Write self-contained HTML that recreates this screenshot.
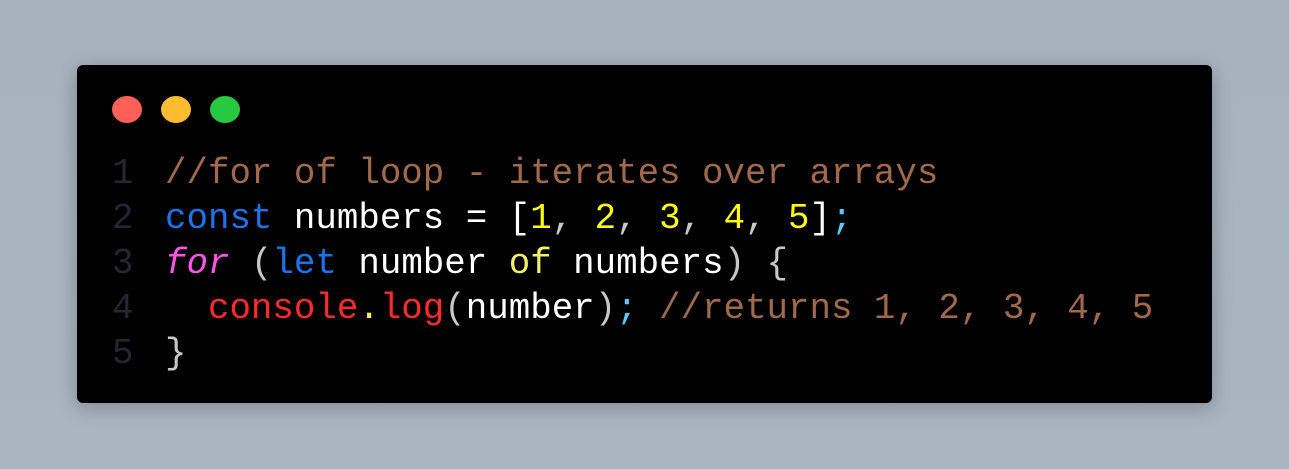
<!DOCTYPE html>
<html><head><style>
html,body{margin:0;padding:0}
body{width:1289px;height:469px;background:linear-gradient(180deg,#a7b2be,#aab5c1);position:relative;overflow:hidden;font-family:"Liberation Mono",monospace}
.card{position:absolute;left:77px;top:65px;width:1135px;height:338px;background:#000;border-radius:6px;box-shadow:0 4px 20px rgba(0,0,0,.25)}
.dot{position:absolute;top:96px;width:30px;height:27px;border-radius:50%}
.line{position:absolute;left:112px;font-size:35.8px;white-space:pre;line-height:45px;color:#fff}
.n{color:#222731;display:inline-block;width:53px}
.c{color:#a0694a}.k{color:#1a74ee}.y{color:#ffff00}.p{color:#ff55e6;font-style:italic}.r{color:#ff2a2a}.s{color:#5ac8fa}.g{color:#c8c8c8}.o{color:#f0f06a}
</style></head><body>
<div class="card"></div>
<div class="dot" style="left:112px;background:#fe5f57"></div>
<div class="dot" style="left:161px;background:#febc2e"></div>
<div class="dot" style="left:210px;background:#28c840"></div>
<div class="line" style="top:151px"><span class="n">1</span><span class="c">//for of loop - iterates over arrays</span></div>
<div class="line" style="top:196px"><span class="n">2</span><span class="k">const</span> numbers = [<span class="y">1</span><span class="g">,</span> <span class="y">2</span><span class="g">,</span> <span class="y">3</span><span class="g">,</span> <span class="y">4</span><span class="g">,</span> <span class="y">5</span>]<span class="s">;</span></div>
<div class="line" style="top:241px"><span class="n">3</span><span class="p">for</span> <span class="g">(</span><span class="k">let</span> number <span class="o">of</span> numbers<span class="g">)</span> <span class="g">{</span></div>
<div class="line" style="top:286px"><span class="n">4</span>  <span class="r">console</span><span class="o">.</span><span class="r">log</span><span class="g">(</span>number<span class="g">)</span><span class="s">;</span> <span class="c">//returns 1, 2, 3, 4, 5</span></div>
<div class="line" style="top:331px"><span class="n">5</span><span class="g">}</span></div>
</body></html>
